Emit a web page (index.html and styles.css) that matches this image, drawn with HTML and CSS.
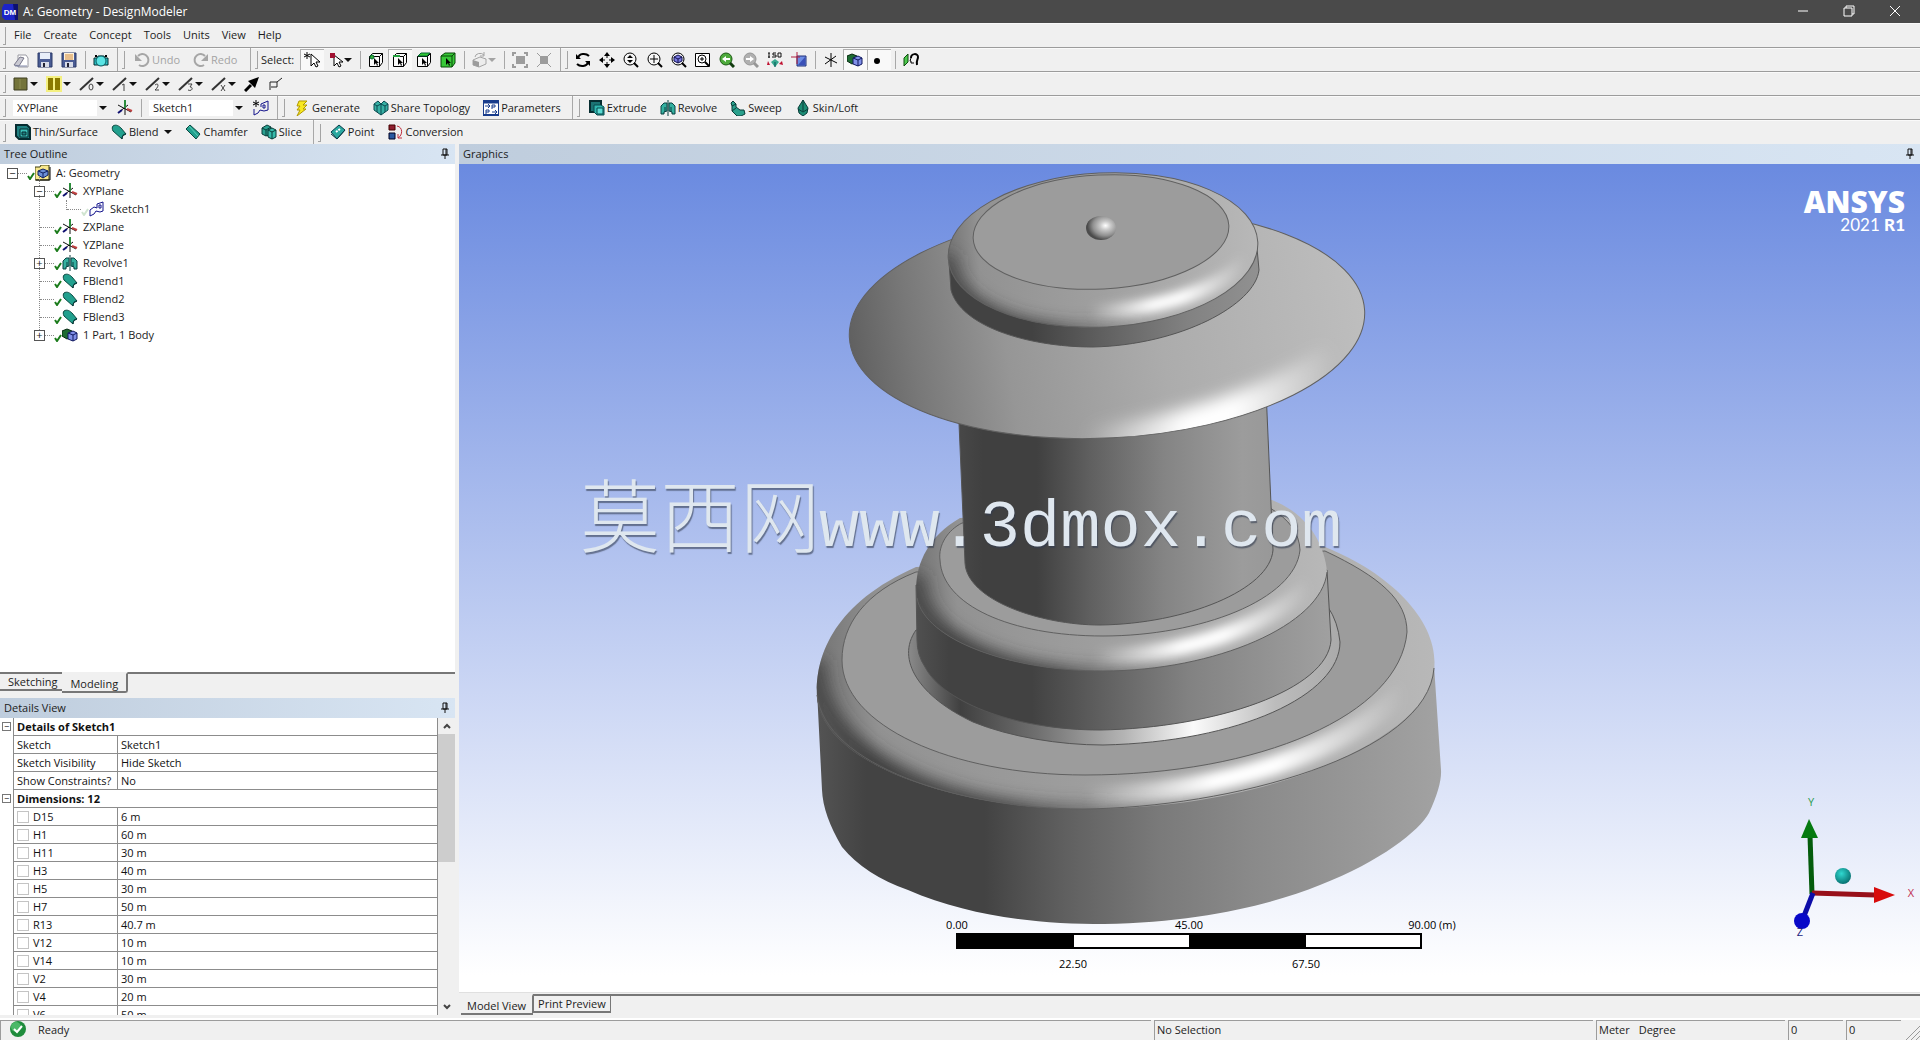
FILE: index.html
```html
<!DOCTYPE html>
<html lang="en">
<head>
<meta charset="utf-8">
<title>A: Geometry - DesignModeler</title>
<link rel="stylesheet" href="styles.css">
</head>
<body>
<svg class="defs" aria-hidden="true">
  <symbol id="i-open" viewBox="0 0 16 16"><path d="M5 3h8l2 3v9H5z" fill="#fff" stroke="#9a9aa2"/><path d="M1 13l6-8 4 1-5 8z" fill="#c9c9d2" stroke="#77778a"/><path d="M2 14h12" stroke="#8088a8"/></symbol>
  <symbol id="i-save" viewBox="0 0 16 16"><path d="M1 1h14v14H1z" fill="#4a5c94" stroke="#2c3a68"/><path d="M3 1h10v6H3z" fill="#e8eefa"/><path d="M4 10h8v5H4z" fill="#d8dce8"/><path d="M6 11h2v4H6z" fill="#223"/></symbol>
  <symbol id="i-saveas" viewBox="0 0 16 16"><path d="M1 1h14v14H1z" fill="#4a5c94" stroke="#2c3a68"/><path d="M3 1h10v7H3z" fill="#fff3dc"/><path d="M4 3h8M4 5h8M4 7h8" stroke="#d08a3c"/><path d="M4 10h8v5H4z" fill="#d8dce8"/><path d="M6 11h2v4H6z" fill="#223"/></symbol>
  <symbol id="i-camera" viewBox="0 0 16 16"><path d="M1 6h3l1-2h6l1 2h3v7H1z" fill="#2ec4c8" stroke="#052c30"/><path d="M3 3v2M13 3v2" stroke="#000" stroke-width="2"/><circle cx="8" cy="9" r="5" fill="#5ae4e4" stroke="#0a5a60"/></symbol>
  <symbol id="i-undo" viewBox="0 0 16 16"><path d="M4 4a6 6 0 1 1 1 9" fill="none" stroke="#a6a6a6" stroke-width="2"/><path d="M1 2v7h7z" fill="#a6a6a6"/></symbol>
  <symbol id="i-redo" viewBox="0 0 16 16"><path d="M12 4a6 6 0 1 0-1 9" fill="none" stroke="#a6a6a6" stroke-width="2"/><path d="M15 2v7H8z" fill="#a6a6a6"/></symbol>
  <symbol id="i-starcur" viewBox="0 0 16 16"><path d="M3 0v7M0 2l6 3M6 2L0 5" stroke="#000"/><path d="M7 2v12l3-3 2 4 2-1-2-4h4z" fill="#fff" stroke="#000"/></symbol>
  <symbol id="i-redcur" viewBox="0 0 16 16"><path d="M6 3v11l3-3 2 4 2-1-2-4h4z" fill="#fff" stroke="#000"/><path d="M2 1h5v5H2z" fill="#a01030"/></symbol>
  <symbol id="i-cube" viewBox="0 0 16 16"><path d="M1.5 4.500l3-3h10v9l-3 4h-10z" fill="#fafafa" stroke="#000"/><path d="M1.500 4.500h10v10M11.500 4.500l3-3" fill="none" stroke="#000"/></symbol>
  <symbol id="i-cur" viewBox="0 0 16 16"><path d="M6 6v7l2-2 1 3 1-1-1-2h2z" fill="#000"/></symbol>
  <symbol id="i-selpt" viewBox="0 0 16 16"><use href="#i-cube"/><circle cx="4" cy="5" r="2" fill="#35b035" stroke="#063"/><use href="#i-cur"/></symbol>
  <symbol id="i-seledge" viewBox="0 0 16 16"><use href="#i-cube"/><path d="M1 4h7" stroke="#25a040" stroke-width="2"/><use href="#i-cur"/></symbol>
  <symbol id="i-selface" viewBox="0 0 16 16"><use href="#i-cube"/><path d="M2 4l3-3h9l-3 3z" fill="#32c832" stroke="#063"/><use href="#i-cur"/></symbol>
  <symbol id="i-selbody" viewBox="0 0 16 16"><path d="M1 4l4-3h10v10l-3 4H1z" fill="#38c838" stroke="#064806"/><path d="M1 4h11v11M12 4l3-3" fill="none" stroke="#064806"/><use href="#i-cur"/></symbol>
  <symbol id="i-graybox" viewBox="0 0 16 16"><path d="M1 8l7-3 6 2v5l-7 3-6-2z" fill="#ededed" stroke="#a4a4a4"/><path d="M1 8l6 2v5l-6-2z" fill="#9c9c9c"/><path d="M3 5a5 4 0 0 1 9-2m0-3v4H8" fill="none" stroke="#a4a4a4"/></symbol>
  <symbol id="i-grow" viewBox="0 0 16 16"><path d="M4 4h9v8H4z" fill="#9c9c9c"/><path d="M1 4V1h3M12 1h3v3M15 12v3h-3M4 15H1v-3" fill="none" stroke="#9c9c9c" stroke-width="2"/></symbol>
  <symbol id="i-shrink" viewBox="0 0 16 16"><path d="M4 4h8v8H4z" fill="#9c9c9c"/><path d="M1 1l3 3M15 1l-3 3M1 15l3-3M15 15l-3-3" stroke="#9c9c9c"/></symbol>
  <symbol id="i-rotate" viewBox="0 0 16 16"><path d="M3 6c1-5 8-5 11-2M13 10c-1 5-8 5-11 2" fill="none" stroke="#000" stroke-width="2"/><path d="M1 2v5h5zM15 14V9h-5z" fill="#000"/></symbol>
  <symbol id="i-pan" viewBox="0 0 16 16"><path d="M8 3v3M8 10v3M3 8h3M10 8h3" stroke="#000"/><path d="M8 0l3 4H5zM8 16l3-4H5zM0 8l4-3v6zM16 8l-4-3v6z" fill="#000"/></symbol>
  <symbol id="i-lens" viewBox="0 0 16 16"><circle cx="7" cy="7" r="6" fill="#f6f6f6" stroke="#000"/><path d="M11 11l4 4" stroke="#000" stroke-width="2"/></symbol>
  <symbol id="i-zoom" viewBox="0 0 16 16"><use href="#i-lens"/><path d="M7 3l3 3H4zM7 11l3-3H4z" fill="#000"/></symbol>
  <symbol id="i-zoomin" viewBox="0 0 16 16"><use href="#i-lens"/><path d="M7 3v8M3 7h8" stroke="#000"/></symbol>
  <symbol id="i-zoomfit" viewBox="0 0 16 16"><use href="#i-lens"/><path d="M7 3l4 2v4l-4 2-4-2V5z" fill="#7a7ae0" stroke="#101050"/><path d="M3 5l4 2 4-2M7 7v4" fill="none" stroke="#101050"/></symbol>
  <symbol id="i-zoombox" viewBox="0 0 16 16"><path d="M.5 1.500h14v13h-14z" fill="#fff" stroke="#000"/><circle cx="7" cy="7" r="4" fill="none" stroke="#000"/><path d="M10 10l4 4" stroke="#000" stroke-width="2"/><path d="M7 5v4M5 7h4" stroke="#000"/></symbol>
  <symbol id="i-zoomprev" viewBox="0 0 16 16"><circle cx="7" cy="7" r="6" fill="#4eaa3c" stroke="#1c5a14"/><path d="M11 11l4 4" stroke="#123c10" stroke-width="3"/><path d="M3 7l4-3v2h4v2H7v2z" fill="#fff"/></symbol>
  <symbol id="i-zoomnext" viewBox="0 0 16 16"><circle cx="7" cy="7" r="6" fill="#b0b0b0" stroke="#969696"/><path d="M11 11l4 4" stroke="#969696" stroke-width="3"/><path d="M11 7L7 4v2H3v2h4v2z" fill="#fff"/></symbol>
  <symbol id="i-iso" viewBox="0 0 16 16"><path d="M2 1v5M1 1h2M1 5h2M9 1H6v2h3v2H5M11 1h3v4h-3z" fill="none" stroke="#111"/><path d="M8 7l4 3-4 5-4-5z" fill="#38a890"/><path d="M1 9l2 4h-3z" fill="#c01030"/><path d="M15 9l1 4-4-1z" fill="#c01030"/><path d="M8 10v5" stroke="#055"/></symbol>
  <symbol id="i-lookat" viewBox="0 0 16 16"><path d="M6 4h9v10H6z" fill="#6c8ce4" stroke="#20307a"/><path d="M7 13l7-8v8z" fill="#3a50b8"/><path d="M0 5h9M6 0v12" stroke="#b02040"/></symbol>
  <symbol id="i-axis" viewBox="0 0 16 16"><path d="M8 1v14M2 12l11-8M2 5l12 6" fill="none" stroke="#000"/></symbol>
  <symbol id="i-body" viewBox="0 0 16 16"><path d="M0 4l5-2 5 2v6l-5 2-5-3z" fill="#1e6b33" stroke="#062810"/><path d="M6 6l5-2 4 2v6l-4 2-5-2z" fill="#8090e8" stroke="#101860"/><path d="M6 6l5 2 4-2M11 8v6" fill="none" stroke="#101860"/></symbol>
  <symbol id="i-dot" viewBox="0 0 16 16"><circle cx="6" cy="9" r="3" fill="#000"/></symbol>
  <symbol id="i-face" viewBox="0 0 16 16"><path d="M1 6l4-4v8l-4 4z" fill="#4cc84c" stroke="#0c4c0c"/><path d="M8 6c0-5 7-5 7-1 0 3-2 3-1 8" fill="none" stroke="#000" stroke-width="2"/><path d="M8 6l-1 3h1v2h3" fill="none" stroke="#000"/></symbol>
  <symbol id="i-olive" viewBox="0 0 16 16"><path d="M1 2h13v12H1z" fill="#74743a" stroke="#3c3c20"/><path d="M7 3v10" stroke="#8c8c50"/></symbol>
  <symbol id="i-yellow" viewBox="0 0 16 16"><path d="M0 0h16v16H0z" fill="#f4f080"/><path d="M2 2h5v12H2zM9 2h5v12H9z" fill="#8a7a00"/></symbol>
  <symbol id="i-slash" viewBox="0 0 16 16"><path d="M1 14L14 2" stroke="#333" stroke-width="2"/></symbol>
  <symbol id="i-e0" viewBox="0 0 16 16"><use href="#i-slash"/><ellipse cx="12" cy="11" rx="2" ry="3" fill="none" stroke="#444"/></symbol>
  <symbol id="i-e1" viewBox="0 0 16 16"><use href="#i-slash"/><path d="M10 9l2-1v7" fill="none" stroke="#444"/></symbol>
  <symbol id="i-e2" viewBox="0 0 16 16"><use href="#i-slash"/><path d="M10 9c4-3 4 2 0 5h4" fill="none" stroke="#444"/></symbol>
  <symbol id="i-e3" viewBox="0 0 16 16"><use href="#i-slash"/><path d="M10 8h4l-2 3c4 0 2 5-2 3" fill="none" stroke="#444"/></symbol>
  <symbol id="i-ex" viewBox="0 0 16 16"><use href="#i-slash"/><path d="M10 9l4 6M14 9l-4 6" stroke="#444"/></symbol>
  <symbol id="i-arrow" viewBox="0 0 16 16"><path d="M1 15l6-6" stroke="#000" stroke-width="3"/><path d="M15 1L11 12 4 5z" fill="#000"/></symbol>
  <symbol id="i-flag" viewBox="0 0 16 16"><path d="M2 14V6h7v5H3M9 6l5-4" fill="none" stroke="#222"/></symbol>
  <symbol id="i-plane" viewBox="0 0 16 16"><path d="M1 5l13 7M2 12l9-7" stroke="#111"/><path d="M8 8v7" stroke="#111"/><path d="M8 0v8" stroke="#2c8c3c" stroke-width="2"/><path d="M10 9l5 2" stroke="#c04040" stroke-width="2"/><path d="M1 13l4-3" stroke="#101070" stroke-width="2"/></symbol>
  <symbol id="i-sketch" viewBox="0 0 16 16"><path d="M1 9l4-3 3 1V3l6-2v9l-3 1-4-1-2 3-4 2z" fill="#fbfcff" stroke="#14148c"/><path d="M10 4h2v3h-2z" fill="none" stroke="#14148c"/></symbol>
  <symbol id="i-newsketch" viewBox="0 0 16 16"><path d="M3 0v7M0 2l6 3M6 2L0 5" stroke="#000"/><path d="M1 9v6l4-2 2-3 4 1 4-1V1L8 4v3" fill="none" stroke="#14148c"/><path d="M10 5h2v3h-2z" fill="none" stroke="#14148c"/></symbol>
  <symbol id="i-bolt" viewBox="0 0 16 16"><path d="M5 1h8l-4 4h4l-4 4h3L3 16l3-6H3l3-4H3z" fill="#f8e820" stroke="#b09800"/></symbol>
  <symbol id="i-share" viewBox="0 0 16 16"><path d="M1 4l4-3 3 3 3-3 4 3v6l-7 5-7-5z" fill="#36b0a4" stroke="#0a4a50"/><path d="M1 4l3 2 4-2 4 2 3-2M4 6v6M8 4v11M12 6v6" fill="none" stroke="#0a4a50"/></symbol>
  <symbol id="i-param" viewBox="0 0 16 16"><path d="M0 1h16v14H0z" fill="#fff" stroke="#183c8c" stroke-width="2"/><path d="M0 2h16" stroke="#183c8c" stroke-width="3"/><path d="M2 6h4M5 4l2 2-2 2M9 9V5h3v2H9M3 14v-4h3v2H3M9 12h4M12 10l2 2-2 2" fill="none" stroke="#183c8c"/></symbol>
  <symbol id="i-extrude" viewBox="0 0 16 16"><path d="M1 1h11v11H1z" fill="#1c7474" stroke="#062c30" stroke-width="2"/><path d="M5 5h7l3 2v8H8l-3-3z" fill="#30b8b0" stroke="#06484c"/><path d="M8 8h6v6H8z" fill="#5adcd4" stroke="#06484c"/></symbol>
  <symbol id="i-revolve" viewBox="0 0 16 16"><path d="M1 6l3-3h3v8l-3 1v2H1zM15 6l-3-3H9v8l3 1v2h3z" fill="#34b0a0" stroke="#084040"/><path d="M8 0v16M5 7v5M11 7v5" stroke="#084040"/></symbol>
  <symbol id="i-sweep" viewBox="0 0 16 16"><path d="M3 1l3 3v3l4 3h4l1 4-4 2H7L2 11V6L1 3z" fill="#2aa08c" stroke="#083c38"/><path d="M6 4L2 6M6 8l-4 3" stroke="#083c38"/></symbol>
  <symbol id="i-loft" viewBox="0 0 16 16"><path d="M8 0l5 8-1 5-4 3-4-3-1-5z" fill="#1c8c74" stroke="#083c38"/><path d="M8 0v11M3 9l5 3 5-3" fill="none" stroke="#083c38"/></symbol>
  <symbol id="i-thin" viewBox="0 0 16 16"><path d="M1 1h11l3 3v11H4l-3-3z" fill="#1f8080" stroke="#062c30" stroke-width="2"/><path d="M5 5h8v8H5z" fill="#3cc0b8" stroke="#062c30"/><path d="M7 8h4v3H7z" fill="#1f8080" stroke="#062c30"/></symbol>
  <symbol id="i-blend" viewBox="0 0 16 16"><path d="M2 2c3-2 6 0 8 2l5 6c-1 1-4 1-4 5L2 7C1 5 1 3 2 2z" fill="#22a08e" stroke="#084840"/><path d="M15 10c-3 0-4 2-4 5" fill="none" stroke="#062c30"/></symbol>
  <symbol id="i-chamfer" viewBox="0 0 16 16"><path d="M1 5l4-4 10 9-4 5z" fill="#22a08e" stroke="#084840"/><path d="M4 2l9 10" stroke="#5cd0b8"/></symbol>
  <symbol id="i-slice" viewBox="0 0 16 16"><path d="M1 4l5-3 4 2v7l-5 2-4-2z" fill="#2aa090" stroke="#083c38"/><path d="M7 6l4-2 4 2v7l-4 2-4-2z" fill="#38bcac" stroke="#083c38"/><path d="M1 4l4 2 5-3M5 6v6M7 6l4 2 4-2M11 8v7" fill="none" stroke="#083c38"/></symbol>
  <symbol id="i-point" viewBox="0 0 16 16"><path d="M1 8l8-7 6 5-8 9z" fill="#2aa8a0" stroke="#083c48"/><path d="M1 10l6 5 8-9" fill="none" stroke="#083c48"/><path d="M6 8l4-3" stroke="#fff" stroke-width="2" stroke-dasharray="2 1"/></symbol>
  <symbol id="i-conv" viewBox="0 0 16 16"><path d="M1 1h6v5H1z" fill="#902030" stroke="#400"/><path d="M1 9h6v6H1z" fill="#2858a0" stroke="#002"/><path d="M9 2c6 1 6 9 1 12M10 10v4h4" fill="none" stroke="#c03040"/></symbol>
  <symbol id="i-geo" viewBox="0 0 16 16"><path d="M0 2h5l1-2h8v15H0z" fill="#f8e88c" stroke="#3c3c10"/><path d="M1 15h14V2" fill="none" stroke="#000"/><path d="M8 4l5 2v4l-5 3-5-3V6z" fill="#6c90d8" stroke="#102060"/><path d="M3 6l5 2 5-2M8 8v5" fill="none" stroke="#102060"/></symbol>
  <symbol id="i-check" viewBox="0 0 8 8"><path d="M1 4l2 3 4-6" fill="none" stroke="#1c7c1c" stroke-width="2"/></symbol>
  <symbol id="i-drop" viewBox="0 0 8 8"><path d="M0 2h8L4 6z" fill="currentColor"/></symbol>
  <symbol id="i-pin" viewBox="0 0 8 12"><path d="M2 1h4v6H2zM0 7h8M4 7v4" fill="none" stroke="#111"/><path d="M5 1v6" stroke="#111"/></symbol>
  <symbol id="i-up" viewBox="0 0 10 10"><path d="M2 7l3-3 3 3" fill="none" stroke="#444" stroke-width="2"/></symbol>
  <symbol id="i-down" viewBox="0 0 10 10"><path d="M2 3l3 3 3-3" fill="none" stroke="#444" stroke-width="2"/></symbol>
</svg>

<header class="titlebar">
  <svg class="applogo" viewBox="0 0 16 16" aria-hidden="true"><path d="M2 0h12l2 4v9l-3 3H3l-3-3V4z" fill="#1c24c8"/><path d="M11 0h5v16h-3z" fill="#0c1070"/><text x="8" y="11" class="logotext">DM</text></svg>
  <h1>A: Geometry - DesignModeler</h1>
  <div class="winbtns">
    <button aria-label="Minimize"><svg viewBox="0 0 12 12"><path d="M1 6h10" stroke="#fff"/></svg></button>
    <button aria-label="Restore"><svg viewBox="0 0 12 12"><path d="M1 3h8v8H1zM3 3V1h8v8H9" fill="none" stroke="#fff"/></svg></button>
    <button aria-label="Close"><svg viewBox="0 0 12 12"><path d="M1 1l10 10M11 1L1 11" stroke="#fff"/></svg></button>
  </div>
</header>

<nav class="bar menu">
  <i class="grip"></i>
  <button>File</button><button>Create</button><button>Concept</button><button>Tools</button><button>Units</button><button>View</button><button>Help</button>
</nav>

<div class="bar">
  <div class="group"><i class="grip"></i>
    <button class="ib" aria-label="Open"><svg><use href="#i-open"/></svg></button>
    <button class="ib" aria-label="Save"><svg><use href="#i-save"/></svg></button>
    <button class="ib" aria-label="Save as"><svg><use href="#i-saveas"/></svg></button>
    <i class="sep"></i>
    <button class="ib" aria-label="Capture"><svg><use href="#i-camera"/></svg></button>
  </div>
  <div class="group"><i class="grip"></i>
    <button class="tb undo" disabled><svg><use href="#i-undo"/></svg>Undo</button>
    <button class="tb undo" disabled><svg><use href="#i-redo"/></svg>Redo</button>
  </div>
  <div class="group"><i class="grip"></i>
    <span class="sel">Select:</span>
    <button class="ib on" aria-label="New selection"><svg><use href="#i-starcur"/></svg></button>
    <button class="ib dd" aria-label="Select mode"><svg><use href="#i-redcur"/></svg><svg class="drop"><use href="#i-drop"/></svg></button>
    <i class="sep"></i>
    <button class="ib" aria-label="Points"><svg><use href="#i-selpt"/></svg></button>
    <button class="ib on" aria-label="Edges"><svg><use href="#i-seledge"/></svg></button>
    <button class="ib" aria-label="Faces"><svg><use href="#i-selface"/></svg></button>
    <button class="ib" aria-label="Bodies"><svg><use href="#i-selbody"/></svg></button>
    <i class="sep"></i>
    <button class="ib dd" disabled aria-label="Extend"><svg><use href="#i-graybox"/></svg><svg class="drop"><use href="#i-drop"/></svg></button>
    <i class="sep"></i>
    <button class="ib" disabled aria-label="Expand"><svg><use href="#i-grow"/></svg></button>
    <button class="ib" disabled aria-label="Shrink"><svg><use href="#i-shrink"/></svg></button>
  </div>
  <div class="group last"><i class="grip"></i>
    <button class="ib" aria-label="Rotate"><svg><use href="#i-rotate"/></svg></button>
    <button class="ib" aria-label="Pan"><svg><use href="#i-pan"/></svg></button>
    <button class="ib" aria-label="Zoom"><svg><use href="#i-zoom"/></svg></button>
    <button class="ib" aria-label="Box zoom"><svg><use href="#i-zoomin"/></svg></button>
    <button class="ib" aria-label="Zoom to fit"><svg><use href="#i-zoomfit"/></svg></button>
    <button class="ib" aria-label="Magnifier"><svg><use href="#i-zoombox"/></svg></button>
    <button class="ib" aria-label="Previous view"><svg><use href="#i-zoomprev"/></svg></button>
    <button class="ib" disabled aria-label="Next view"><svg><use href="#i-zoomnext"/></svg></button>
    <button class="ib" aria-label="Isometric view"><svg><use href="#i-iso"/></svg></button>
    <button class="ib" aria-label="Look at plane"><svg><use href="#i-lookat"/></svg></button>
    <i class="sep"></i>
    <button class="ib" aria-label="Display plane"><svg><use href="#i-axis"/></svg></button>
    <button class="ib on" aria-label="Display model"><svg><use href="#i-body"/></svg></button>
    <button class="ib on" aria-label="Display points"><svg><use href="#i-dot"/></svg></button>
    <i class="sep"></i>
    <button class="ib" aria-label="Look at face"><svg><use href="#i-face"/></svg></button>
  </div>
</div>

<div class="bar">
  <div class="group last"><i class="grip"></i>
    <button class="ib edge" aria-label="Face color"><svg><use href="#i-olive"/></svg><svg class="drop"><use href="#i-drop"/></svg></button>
    <button class="ib edge" aria-label="Edge color"><svg><use href="#i-yellow"/></svg><svg class="drop"><use href="#i-drop"/></svg></button>
    <button class="ib edge" aria-label="Free edges"><svg><use href="#i-e0"/></svg><svg class="drop"><use href="#i-drop"/></svg></button>
    <button class="ib edge" aria-label="Single edges"><svg><use href="#i-e1"/></svg><svg class="drop"><use href="#i-drop"/></svg></button>
    <button class="ib edge" aria-label="Double edges"><svg><use href="#i-e2"/></svg><svg class="drop"><use href="#i-drop"/></svg></button>
    <button class="ib edge" aria-label="Triple edges"><svg><use href="#i-e3"/></svg><svg class="drop"><use href="#i-drop"/></svg></button>
    <button class="ib edge" aria-label="Multiple edges"><svg><use href="#i-ex"/></svg><svg class="drop"><use href="#i-drop"/></svg></button>
    <button class="ib" aria-label="Edge direction"><svg><use href="#i-arrow"/></svg></button>
    <button class="ib" aria-label="Vertices"><svg><use href="#i-flag"/></svg></button>
  </div>
</div>

<div class="bar">
  <div class="group"><i class="grip"></i>
    <label class="combo"><select aria-label="Active plane"><option>XYPlane</option></select><svg class="drop"><use href="#i-drop"/></svg></label>
    <button class="ib" aria-label="New plane"><svg><use href="#i-plane"/></svg></button>
    <i class="sep"></i>
    <label class="combo"><select aria-label="Active sketch"><option>Sketch1</option></select><svg class="drop"><use href="#i-drop"/></svg></label>
    <button class="ib" aria-label="New sketch"><svg><use href="#i-newsketch"/></svg></button>
  </div>
  <div class="group"><i class="grip"></i>
    <button class="tb"><svg><use href="#i-bolt"/></svg>Generate</button>
    <button class="tb"><svg><use href="#i-share"/></svg>Share Topology</button>
    <button class="tb"><svg><use href="#i-param"/></svg>Parameters</button>
  </div>
  <div class="group last"><i class="grip"></i>
    <button class="tb"><svg><use href="#i-extrude"/></svg>Extrude</button>
    <button class="tb"><svg><use href="#i-revolve"/></svg>Revolve</button>
    <button class="tb"><svg><use href="#i-sweep"/></svg>Sweep</button>
    <button class="tb"><svg><use href="#i-loft"/></svg>Skin/Loft</button>
  </div>
</div>

<div class="bar final">
  <div class="group"><i class="grip"></i>
    <button class="tb"><svg><use href="#i-thin"/></svg>Thin/Surface</button>
    <button class="tb"><svg><use href="#i-blend"/></svg>Blend<svg class="drop"><use href="#i-drop"/></svg></button>
    <button class="tb"><svg><use href="#i-chamfer"/></svg>Chamfer</button>
    <button class="tb"><svg><use href="#i-slice"/></svg>Slice</button>
  </div>
  <div class="group last"><i class="grip"></i>
    <button class="tb"><svg><use href="#i-point"/></svg>Point</button>
    <button class="tb"><svg><use href="#i-conv"/></svg>Conversion</button>
  </div>
</div>

<main>
  <aside>
    <section class="outline">
      <h2>Tree Outline<svg class="pin"><use href="#i-pin"/></svg></h2>
      <ul class="tree">
        <li class="l0"><button class="box" aria-label="Collapse">−</button><i class="dots"></i><svg class="ck"><use href="#i-check"/></svg><svg class="ic"><use href="#i-geo"/></svg><span>A: Geometry</span></li>
        <li class="l1"><button class="box" aria-label="Collapse">−</button><i class="dots"></i><svg class="ck"><use href="#i-check"/></svg><svg class="ic"><use href="#i-plane"/></svg><span>XYPlane</span></li>
        <li class="l1 l2"><i class="box none"></i><i class="dots"></i><svg class="ck faint"><use href="#i-check"/></svg><svg class="ic"><use href="#i-sketch"/></svg><span>Sketch1</span></li>
        <li class="l1"><i class="box none"></i><i class="dots"></i><svg class="ck"><use href="#i-check"/></svg><svg class="ic"><use href="#i-plane"/></svg><span>ZXPlane</span></li>
        <li class="l1"><i class="box none"></i><i class="dots"></i><svg class="ck"><use href="#i-check"/></svg><svg class="ic"><use href="#i-plane"/></svg><span>YZPlane</span></li>
        <li class="l1"><button class="box" aria-label="Expand">+</button><i class="dots"></i><svg class="ck"><use href="#i-check"/></svg><svg class="ic"><use href="#i-revolve"/></svg><span>Revolve1</span></li>
        <li class="l1"><i class="box none"></i><i class="dots"></i><svg class="ck"><use href="#i-check"/></svg><svg class="ic"><use href="#i-blend"/></svg><span>FBlend1</span></li>
        <li class="l1"><i class="box none"></i><i class="dots"></i><svg class="ck"><use href="#i-check"/></svg><svg class="ic"><use href="#i-blend"/></svg><span>FBlend2</span></li>
        <li class="l1"><i class="box none"></i><i class="dots"></i><svg class="ck"><use href="#i-check"/></svg><svg class="ic"><use href="#i-blend"/></svg><span>FBlend3</span></li>
        <li class="l1 end"><button class="box" aria-label="Expand">+</button><i class="dots"></i><svg class="ck"><use href="#i-check"/></svg><svg class="ic"><use href="#i-body"/></svg><span>1 Part, 1 Body</span></li>
      </ul>
      <div class="tabs side"><button>Sketching</button><button class="active">Modeling</button><i class="rest"></i></div>
    </section>
    <section class="details">
      <h2>Details View<svg class="pin"><use href="#i-pin"/></svg></h2>
      <div class="scroller">
        <table>
          <colgroup><col class="c0"><col class="c1"><col></colgroup>
          <tr class="head"><td><button class="mini" aria-label="Collapse">−</button></td><th colspan="2">Details of Sketch1</th></tr>
          <tr><td></td><td>Sketch</td><td>Sketch1</td></tr>
          <tr><td></td><td>Sketch Visibility</td><td>Hide Sketch</td></tr>
          <tr><td></td><td>Show Constraints?</td><td>No</td></tr>
          <tr class="head"><td><button class="mini" aria-label="Collapse">−</button></td><th colspan="2">Dimensions: 12</th></tr>
          <tr><td></td><td><label><input type="checkbox">D15</label></td><td>6 m</td></tr>
          <tr><td></td><td><label><input type="checkbox">H1</label></td><td>60 m</td></tr>
          <tr><td></td><td><label><input type="checkbox">H11</label></td><td>30 m</td></tr>
          <tr><td></td><td><label><input type="checkbox">H3</label></td><td>40 m</td></tr>
          <tr><td></td><td><label><input type="checkbox">H5</label></td><td>30 m</td></tr>
          <tr><td></td><td><label><input type="checkbox">H7</label></td><td>50 m</td></tr>
          <tr><td></td><td><label><input type="checkbox">R13</label></td><td>40.7 m</td></tr>
          <tr><td></td><td><label><input type="checkbox">V12</label></td><td>10 m</td></tr>
          <tr><td></td><td><label><input type="checkbox">V14</label></td><td>10 m</td></tr>
          <tr><td></td><td><label><input type="checkbox">V2</label></td><td>30 m</td></tr>
          <tr><td></td><td><label><input type="checkbox">V4</label></td><td>20 m</td></tr>
          <tr><td></td><td><label><input type="checkbox">V6</label></td><td>50 m</td></tr>
        </table>
        <div class="vbar">
          <button aria-label="Scroll up"><svg><use href="#i-up"/></svg></button>
          <i class="thumb"></i>
          <button aria-label="Scroll down"><svg><use href="#i-down"/></svg></button>
        </div>
      </div>
    </section>
  </aside>

  <section class="graphics">
    <h2>Graphics<svg class="pin"><use href="#i-pin"/></svg></h2>
    <div class="canvas">
      <svg class="scene" viewBox="459 164 1461 828" role="img" aria-label="Revolved body">
        <defs>
          <linearGradient id="col" gradientUnits="userSpaceOnUse" x1="958" x2="1274" y1="0" y2="0"><stop offset="0" stop-color="#484848"/><stop offset=".08" stop-color="#404040"/><stop offset=".25" stop-color="#404040"/><stop offset=".42" stop-color="#606060"/><stop offset=".65" stop-color="#848484"/><stop offset=".9" stop-color="#9c9c9c"/><stop offset="1" stop-color="#989898"/></linearGradient>
          <linearGradient id="mid" gradientUnits="userSpaceOnUse" x1="916" x2="1330" y1="0" y2="0"><stop offset="0" stop-color="#505050"/><stop offset=".08" stop-color="#424242"/><stop offset=".28" stop-color="#424242"/><stop offset=".45" stop-color="#606060"/><stop offset=".66" stop-color="#828282"/><stop offset="1" stop-color="#a0a0a0"/></linearGradient>
          <linearGradient id="base" gradientUnits="userSpaceOnUse" x1="816" x2="1441" y1="0" y2="0"><stop offset="0" stop-color="#545454"/><stop offset=".08" stop-color="#434343"/><stop offset=".27" stop-color="#434343"/><stop offset=".4" stop-color="#606060"/><stop offset=".55" stop-color="#7a7a7a"/><stop offset=".7" stop-color="#8a8a8a"/><stop offset="1" stop-color="#a2a2a2"/></linearGradient>
          <linearGradient id="brim" gradientUnits="userSpaceOnUse" x1="850" x2="1364" y1="350" y2="300"><stop offset="0" stop-color="#606060"/><stop offset=".12" stop-color="#787878"/><stop offset=".3" stop-color="#969696"/><stop offset=".6" stop-color="#acacac"/><stop offset="1" stop-color="#bebebe"/></linearGradient>
          <linearGradient id="ring" x1="0" x2="1" y1="0" y2="0"><stop offset="0" stop-color="#747474"/><stop offset=".1" stop-color="#929292"/><stop offset=".5" stop-color="#a0a0a0"/><stop offset="1" stop-color="#b8b8b8"/></linearGradient>
          <linearGradient id="dark" x1="0" x2="1" y1="0" y2="0"><stop offset="0" stop-color="#383838" stop-opacity=".7"/><stop offset=".15" stop-color="#383838"/><stop offset=".5" stop-color="#383838" stop-opacity=".9"/><stop offset="1" stop-color="#505050" stop-opacity="0"/></linearGradient>
          <linearGradient id="shine" x1="0" x2="1" y1="0" y2="0"><stop offset="0" stop-color="#fff" stop-opacity="0"/><stop offset=".4" stop-color="#fff"/><stop offset=".6" stop-color="#fff"/><stop offset="1" stop-color="#fff" stop-opacity="0"/></linearGradient>
          <linearGradient id="fil" x1="0" x2="1" y1="0" y2="0"><stop offset="0" stop-color="#8a8a8a"/><stop offset=".12" stop-color="#404040"/><stop offset=".3" stop-color="#707070"/><stop offset=".5" stop-color="#b4b4b4"/><stop offset=".66" stop-color="#fafafa"/><stop offset=".85" stop-color="#bcbcbc"/><stop offset="1" stop-color="#aaa"/></linearGradient>
          <radialGradient id="ball" cx=".65" cy=".4" r=".6"><stop offset="0" stop-color="#fff"/><stop offset=".3" stop-color="#c8c8c8"/><stop offset=".7" stop-color="#909090"/><stop offset="1" stop-color="#4c4c4c"/></radialGradient>
          <radialGradient id="cyan" cx=".4" cy=".35" r=".7"><stop offset="0" stop-color="#30d8d0"/><stop offset="1" stop-color="#066c6c"/></radialGradient>
          <filter id="b5" x="-50%" y="-50%" width="200%" height="200%"><feGaussianBlur stdDeviation="5"/></filter>
          <filter id="b9" x="-50%" y="-50%" width="200%" height="200%"><feGaussianBlur stdDeviation="8"/></filter>
          <path id="p-base" d="M817 697C815 660 830 605 916 567L1325 547C1395 575 1440 625 1434 670C1430 690 1425 700 1411 713C1370 755 1255 809 1082 809C960 809 822 765 817 697z"/>
          <path id="p-mid" d="M917 598C913 570 925 538 960 518L1272 500C1305 513 1324 540 1327 572C1322 625 1215 671 1103 671C1010 671 925 640 917 598z"/>
          <ellipse id="p-cap" cx="1103" cy="250" rx="155" ry="77" transform="rotate(-3 1103 250)"/>
          <ellipse id="p-brim" cx="1107" cy="324" rx="258" ry="114" transform="rotate(-3 1107 324)"/>
          <clipPath id="k-base"><use href="#p-base"/></clipPath>
          <clipPath id="k-mid"><use href="#p-mid"/></clipPath>
          <clipPath id="k-cap"><use href="#p-cap"/></clipPath>
          <clipPath id="k-brim"><use href="#p-brim"/></clipPath>
        </defs>

        <!-- lower disc -->
        <path d="M817 690L822 790Q823 815 842 847Q865 875 908 890C970 917 1040 924 1104 924C1200 922 1270 905 1320 885C1380 862 1420 830 1429 813Q1442 785 1441 770L1434 665z" fill="url(#base)"/>
        <use href="#p-base" fill="url(#ring)"/>
        <g clip-path="url(#k-base)" fill="none">
          <path d="M815 660C812 755 935 816 1082 816Q1150 815 1200 808" stroke="url(#dark)" stroke-width="22" filter="url(#b9)"/>
          <path d="M1085 796C1225 793 1345 752 1405 690" stroke="url(#shine)" stroke-width="20" filter="url(#b5)"/>
        </g>
        <path d="M842 660C842 625 865 592 916 572L1325 551C1380 577 1407 600 1407 632C1400 715 1260 775 1085 775C950 775 842 725 842 660z" class="flat"/>
        <path d="M817 695C825 765 960 809 1082 809C1230 808 1428 755 1434 668" class="ln"/>
        <!-- fillet ring -->
        <path d="M916 630C895 660 920 697 973 722C1010 737 1060 745 1103 745C1240 742 1340 695 1340 642Q1338 622 1328 607z" fill="url(#fil)" class="edge3"/>
        <!-- middle disc -->
        <path d="M916 585L917 640Q917 655 925 667C945 705 1020 730 1100 730C1215 728 1328 690 1331 640L1327 570z" fill="url(#mid)" class="edge3"/>
        <use href="#p-mid" fill="url(#ring)"/>
        <g clip-path="url(#k-mid)" fill="none">
          <path d="M915 575C910 645 1010 679 1103 679Q1150 678 1190 670" stroke="url(#dark)" stroke-width="22" filter="url(#b9)"/>
          <path d="M1095 657C1190 655 1270 625 1310 585" stroke="url(#shine)" stroke-width="17" filter="url(#b5)"/>
        </g>
        <path d="M940 560C938 545 948 530 962 523L1270 508Q1299 525 1300 550C1295 600 1200 636 1103 636C1010 636 942 605 940 560z" class="flat"/>
        <path d="M917 598C925 640 1010 671 1103 671C1215 671 1322 625 1327 572" class="ln"/>
        <!-- column -->
        <path d="M958 400L965 563C967 600 1040 625 1100 625C1185 624 1270 590 1273 550L1266 390z" fill="url(#col)" class="edge3"/>
        <!-- brim -->
        <use href="#p-brim" fill="url(#brim)"/>
        <g clip-path="url(#k-brim)" fill="none">
          <path d="M1085 446C1170 438 1270 408 1335 362" stroke="url(#shine)" stroke-width="38" filter="url(#b9)"/>
        </g>
        <use href="#p-brim" class="ln"/>
        <!-- cap -->
        <path d="M949 262L951 290C960 325 1025 347 1093 347C1180 345 1255 305 1259 270L1257 248z" fill="url(#mid)" class="edge3"/>
        <use href="#p-cap" fill="url(#ring)"/>
        <g clip-path="url(#k-cap)" fill="none">
          <path d="M947 255C945 310 1020 334 1080 334Q1120 333 1150 328" stroke="url(#dark)" stroke-width="18" filter="url(#b9)"/>
          <path d="M1090 312C1160 310 1220 290 1246 260" stroke="url(#shine)" stroke-width="15" filter="url(#b5)"/>
        </g>
        <use href="#p-cap" class="ln"/>
        <ellipse cx="1101" cy="232" rx="128" ry="57" transform="rotate(-3 1101 232)" class="flat"/>
        <ellipse cx="1101" cy="228" rx="15" ry="12" fill="url(#ball)"/>

        <!-- scale ruler -->
        <path d="M957 934h464v14H957z" fill="#fff" stroke="#000" stroke-width="2"/>
        <path d="M957 933h117v16H957zM1189 933h117v16h-117z"/>
        <g class="num"><text x="957" y="929">0.00</text><text x="1189" y="929">45.00</text><text x="1432" y="929">90.00 (m)</text><text x="1073" y="968">22.50</text><text x="1306" y="968">67.50</text></g>

        <!-- axis triad -->
        <path d="M1812 894L1810 836" stroke="#045c0c" stroke-width="5"/><path d="M1809 819l9 19h-17z" fill="#057a10"/>
        <path d="M1812 893L1875 895" stroke="#98101a" stroke-width="5"/><path d="M1895 895l-21-8v16z" fill="#d80c0c"/>
        <path d="M1813 893L1804 916" stroke="#0c0ca8" stroke-width="5"/><circle cx="1802" cy="921" r="8" fill="#0808c8"/>
        <circle cx="1843" cy="876" r="8" fill="url(#cyan)"/>
        <g class="num"><text x="1811" y="806" fill="#2c9c50">Y</text><text x="1911" y="897" fill="#c03050">X</text><text x="1800" y="936" fill="#1c1c80">Z</text></g>

        <text class="mark cjk" x="580" y="546">莫西网</text>
        <text class="mark latin" x="819" y="546">www.3dmox.com</text>
      </svg>
      <div class="brand"><b>ANSYS</b><span>2021 <strong>R1</strong></span></div>
    </div>
    <div class="tabs view"><button class="active">Model View</button><button>Print Preview</button><i class="rest"></i></div>
  </section>
</main>

<footer>
  <div class="ready"><svg viewBox="0 0 16 16"><circle cx="8" cy="8" r="8" fill="#1f8c3c"/><circle cx="6" cy="6" r="5" fill="#4cb868"/><path d="M4 8l3 3 5-6" fill="none" stroke="#fff" stroke-width="2"/></svg>Ready</div>
  <div class="cell pick">No Selection</div>
  <div class="cell unit"><span>Meter</span><span>Degree</span></div>
  <div class="cell n">0</div>
  <div class="cell n">0</div>
  <svg class="gripper" viewBox="0 0 16 16"><path d="M2 16L16 2M7 16l9-9M12 16l4-4" stroke="#999"/></svg>
</footer>
</body>
</html>
```
FILE: styles.css
```css
* { box-sizing: border-box; }
body {
  margin: 0; height: 100vh; display: flex; flex-direction: column; overflow: hidden;
  background: #f0f0f0; color: #1c1c1c; font: 11px/16px "Open Sans", "Noto Sans", sans-serif;
}
.defs { position: absolute; width: 0; height: 0; }
button { font: inherit; color: inherit; background: none; border: 0; padding: 0; margin: 0; }
svg { display: block; flex: none; }
i { display: block; }

.titlebar { height: 23px; flex: none; background: #4a4a4a; color: #fff; display: flex; align-items: center; padding-left: 2px; }
.applogo { width: 16px; height: 20px; }
.logotext { font: bold 8px "Liberation Sans", sans-serif; fill: #fff; text-anchor: middle; }
.titlebar h1 { margin: 0 0 0 5px; font-size: 12px; font-weight: 400; flex: 1; }
.winbtns { display: flex; padding-bottom: 2px; }
.winbtns button { width: 46px; display: flex; justify-content: center; }
.winbtns svg { width: 12px; height: 12px; }
.winbtns button:last-child { margin-right: 2px; }

.bar { height: 24px; flex: none; display: flex; border-bottom: 1px solid #9c9c9c; box-shadow: inset 0 1px #fafafa; }
.bar.final { border-bottom: 0; }
.menu { height: 25px; align-items: center; }
.menu button { margin-left: 5px; margin-right: 7px; }
.grip { flex: none; width: 9px; height: 17px; align-self: center; }
.grip::after { content: ""; display: block; width: 2px; height: 17px; margin-left: 3px; border-right: 1px solid #a4a4a4; border-bottom: 1px solid #a4a4a4; }
.group { display: flex; align-items: center; padding-right: 4px; border-right: 1px solid #a8a8a8; margin-right: 1px; }
.group.last { border-right: 0; }
.sep { width: 8px; height: 18px; flex: none; }
.sep::after { content: ""; display: block; height: 18px; width: 4px; border-right: 1px solid #a8a8a8; }
.ib { width: 24px; height: 21px; flex: none; display: flex; align-items: center; justify-content: center; }
.ib svg { width: 16px; height: 16px; }
.ib.dd { width: 32px; }
.ib.edge { width: 33px; gap: 1px; }
.ib.on { background: #f9f9f9; box-shadow: inset 1px 1px #b0b0b0; }
.ib svg.drop, svg.drop { width: 8px; height: 8px; color: #111; }
:disabled, :disabled svg.drop { color: #a4a4a4; }
.sel { width: 39px; }
.tb { display: flex; align-items: center; gap: 2px; padding: 0 7px 0 6px; height: 21px; white-space: nowrap; }
.tb svg { width: 16px; height: 16px; }
.tb svg.drop { margin-left: 4px; width: 8px; height: 8px; }
.tb.undo { width: 59px; padding-right: 0; }
.combo { display: flex; align-items: center; gap: 2px; padding: 0 6px 0 4px; }
.combo select { appearance: none; border: 0; border-radius: 0; background: #fff; width: 84px; height: 16px; padding: 0 4px; font: inherit; font-size: 11px; color: inherit; }

main { flex: 1; min-height: 0; display: grid; grid-template-columns: 455px minmax(0, 1fr); column-gap: 4px; }
aside { display: flex; flex-direction: column; min-height: 0; }
h2 { margin: 0; height: 20px; flex: none; display: flex; align-items: center; justify-content: space-between; padding: 0 6px 0 4px; font-size: 11px; font-weight: 400; background: linear-gradient(90deg, #bfcddd, #d8e5f3); }
.pin { width: 8px; height: 12px; }
.outline { flex: 1; min-height: 0; display: flex; flex-direction: column; }
.tree { list-style: none; margin: 0; padding: 0 0 0 7px; flex: 1; min-height: 0; background: #fff; }
.tree li { height: 18px; display: flex; align-items: center; position: relative; }
.l1 { padding-left: 27px; }
.l2.l1 { padding-left: 54px; }
.l1::before { content: ""; position: absolute; left: 32px; top: -5px; bottom: 4px; border-left: 1px dotted #888; }
.l2::after { content: ""; position: absolute; left: 59px; top: 0; bottom: 8px; border-left: 1px dotted #888; }
.box { width: 11px; height: 11px; border: 1px solid #555; background: #fff; font-size: 11px; line-height: 8px; text-align: center; flex: none; position: relative; }
.box.none { width: 6px; height: 1px; border: 0; margin-right: 5px; background: none; position: static; }
.box.none + .dots { width: 14px; margin-left: -5px; }
.dots { width: 9px; border-top: 1px dotted #888; }
.ck { width: 8px; height: 8px; margin-top: 6px; }
.ck.faint { opacity: .2; }
.ic { width: 16px; height: 16px; }
.tree span { margin-left: 5px; }

.tabs { display: flex; flex: none; }
.tabs .rest { flex: 1; border-top: 2px solid #777; }
.side { height: 26px; align-items: flex-start; }
.side button { height: 19px; padding: 0 5px 0 8px; border-top: 2px solid #777; border-bottom: 2px solid #777; line-height: 15px; }
.side .active { height: 21px; border-top-color: transparent; border-right: 2px solid #777; border-radius: 0 0 3px 0; padding: 2px 8px 0 8px; line-height: 15px; }
.details { flex: 0 0 317px; display: flex; flex-direction: column; min-height: 0; margin-bottom: 3px; }
.scroller { flex: 1; min-height: 0; overflow: hidden; display: flex; background: #fff; }
table { width: 438px; flex: none; border-collapse: collapse; table-layout: fixed; align-self: flex-start; margin-top: -1px; }
.c0 { width: 13px; }
.c1 { width: 104px; }
tr { height: 18px; }
td, th { padding: 0 3px; height: 18px; line-height: 16px; border: 1px solid #8c8c8c; text-align: left; white-space: nowrap; color: #111; }
td:first-child { border-color: transparent #8c8c8c transparent transparent; padding: 0 1px; }
.mini { display: block; width: 9px; height: 9px; border: 1px solid #777; line-height: 6px; font-size: 9px; text-align: center; }
td label { display: flex; align-items: center; gap: 4px; }
input[type=checkbox] { appearance: none; margin: 0; width: 12px; height: 12px; border: 1px solid #c4c4c4; background: #fff; }
.vbar { flex: 1; background: #f0f0f0; display: flex; flex-direction: column; }
.vbar button { height: 16px; display: flex; justify-content: center; align-items: center; }
.vbar button:last-child { margin-top: auto; }
.vbar svg { width: 10px; height: 10px; }
.thumb { height: 128px; background: #cdcdcd; }

.graphics { display: flex; flex-direction: column; min-width: 0; min-height: 0; margin-bottom: 3px; }
.canvas { flex: 1; min-height: 0; position: relative; background: linear-gradient(#6a8ae0, #fff 98%); }
.scene { position: absolute; inset: 0; width: 100%; height: 100%; }
.flat { fill: #9c9c9c; stroke: #606060; stroke-width: 1; }
.ln { fill: none; stroke: #606060; stroke-width: 1; }
.edge3 { stroke: #555; stroke-width: 1; }
.num { font: 11px "Open Sans", sans-serif; text-anchor: middle; }
.mark { fill: #dfe7ef; text-shadow: 1px 2px 1px rgba(50, 60, 80, .6); }
.cjk { font: 300 80px "Noto Sans CJK SC", sans-serif; }
.latin { font: 67px "Liberation Mono", monospace; }
.brand { position: absolute; top: 24px; right: 15px; color: #fff; text-align: right; display: flex; flex-direction: column; }
.brand b { font: 800 30px/28px "Open Sans", sans-serif; }
.brand span { font: 17px/18px "Lato", sans-serif; }
.brand strong { font-weight: 900; }
.view { height: 23px; padding: 0 0 0 2px; border-top: 1px solid #e0e0e0; }
.view button { margin-top: 1px; height: 19px; padding: 0 4px; border: 2px solid #777; border-width: 2px 1px; line-height: 15px; }
.view .active { height: 21px; border-top-color: transparent; border-left: 0; line-height: 19px; padding: 0 6px; }
.view .rest { margin-top: 1px; }

footer { height: 22px; flex: none; display: flex; gap: 3px; align-items: stretch; border-top: 2px solid #fff; line-height: 17px; }
footer > div { border-top: 1px solid #9c9c9c; border-left: 1px solid #9c9c9c; }
.ready { flex: 1; display: flex; align-items: flex-start; gap: 12px; padding-left: 9px; }
.ready svg { width: 16px; height: 16px; }
.cell { padding-left: 2px; }
.pick { width: 439px; }
.unit { width: 189px; display: flex; gap: 9px; }
.n { width: 55px; }
.gripper { width: 16px; height: 16px; align-self: flex-end; }
```
